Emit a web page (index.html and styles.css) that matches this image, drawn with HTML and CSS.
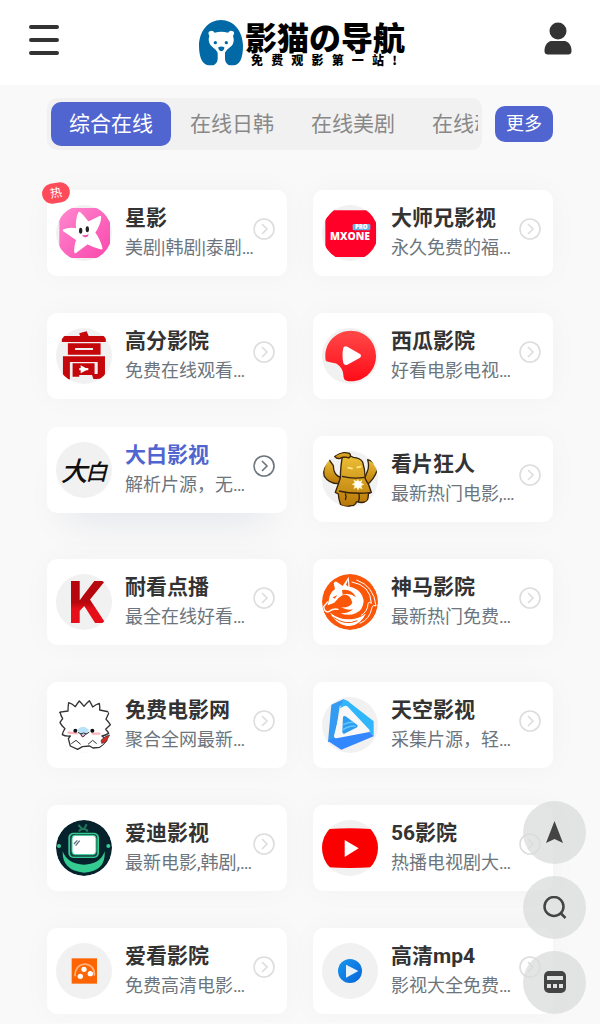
FILE: index.html
```html
<!DOCTYPE html>
<html lang="zh-CN">
<head>
    <meta charset="UTF-8">
    <meta name="viewport" content="width=device-width, initial-scale=1">
    <title>影猫の导航</title>
    <link rel="stylesheet" href="styles.css">
</head>
<body>
    <svg class="symbols" aria-hidden="true">
        <symbol id="arrow" viewBox="0 0 22 22">
            <circle cx="11" cy="11" r="10" fill="none" stroke="currentColor" stroke-width="1.6"/>
            <path d="M9 6l5 5-5 5" fill="none" stroke="currentColor" stroke-width="1.6"/>
        </symbol>
    </svg>

    <header class="header">
        <button class="icon-btn" aria-label="菜单">
            <svg width="32" height="32" viewBox="0 0 32 32"><path d="M3 4h26M3 17h26M3 30h26" stroke="#333" stroke-width="4" stroke-linecap="round"/></svg>
        </button>
        <a class="brand" href="#">
            <svg width="44" height="46" viewBox="0 0 132 138">
                <path d="M66 0C28 0 0 34 0 78c0 38 13 58 30 58h8c13 0 19-12 18-25V90h22v21c-1 13 5 25 18 25h8c17 0 28-20 28-58C132 34 104 0 66 0z" fill="#0069a6"/>
                <path d="M31 48q-7-14 4-15 7-2 12 5 20-5 40 0 5-7 12-5 11 2 3 15 6 17-4 29-8 7-14 12l-7 10q-10 7-20 0l-7-10q-9-6-15-13-9-12-4-28z" fill="#fff"/>
                <circle cx="49" cy="68" r="5" fill="#0069a6"/>
                <circle cx="82" cy="68" r="5" fill="#0069a6"/>
                <path d="M58 82q9-5 18 0 0 10-9 12-9-2-9-12z" fill="#0069a6"/>
            </svg>
            <span class="brand-text">
                <span class="brand-name">影猫の导航</span>
                <span class="brand-slogan"><span>免</span><span>费</span><span>观</span><span>影</span><span>第</span><span>一</span><span>站</span><span>!</span></span>
            </span>
        </a>
        <button class="icon-btn" aria-label="用户">
            <svg width="28" height="34" viewBox="0 0 28 34"><circle cx="14" cy="9" r="8.500" fill="#333"/><path d="M7 19h14c4 1 6.500 5 6.500 9.500 0 3-1 4-4 4h-19c-3 0-4-1-4-4C.5 24 3 20 7 19z" fill="#333"/></svg>
        </button>
    </header>

    <main class="content">
        <div class="tab-bar">
            <nav class="tabs">
                <a class="tab active" href="#">综合在线</a>
                <a class="tab" href="#">在线日韩</a>
                <a class="tab" href="#">在线美剧</a>
                <a class="tab" href="#">在线动漫</a>
            </nav>
            <a class="more" href="#">更多</a>
        </div>

        <div class="grid">
            <a class="card" href="#">
                <span class="badge">热</span>
                <svg class="logo" viewBox="0 0 168 168">
                    <defs><linearGradient id="pink" x2="1" y2="1"><stop stop-color="#ff87cf"/><stop offset="1" stop-color="#fa48ac"/></linearGradient></defs>
                    <path d="M34 9h104l24 26v100l-24 24H34l-24-24V35z" fill="url(#pink)"/>
                    <path d="M70 24Q82 34 96 54L132 36Q132 55 114 83 130 105 136 130 116 126 94 114L58 141Q57 126 64 104L24 76Q42 68 64 74 61 42 70 24z" fill="#fff" stroke="#fff" stroke-width="7" stroke-linejoin="round"/>
                    <ellipse cx="74" cy="77" rx="5" ry="9" fill="#222"/>
                    <ellipse cx="94" cy="73" rx="5" ry="9" fill="#222"/>
                    <path d="M78 90q12 3 20-3-2 11-11 10-7-1-9-7z" fill="#f04cab"/>
                </svg>
                <span class="info"><strong class="title">星影</strong><span class="desc">美剧|韩剧|泰剧…</span></span>
                <svg class="arrow"><use href="#arrow"/></svg>
            </a>
            <a class="card" href="#">
                <svg class="logo" viewBox="0 0 168 168">
                    <path d="M34 16h104l24 26v90l-24 24H34l-24-24V42z" fill="#ff0028"/>
                    <rect x="92" y="57" width="53" height="19" rx="4" fill="#63b5e7"/>
                    <text x="118" y="73" class="logo-latin" font-size="18" fill="#fff" text-anchor="middle">PRO</text>
                    <text x="84" y="105" class="logo-latin" font-size="31" fill="#fff" text-anchor="middle">MXONE</text>
                </svg>
                <span class="info"><strong class="title">大师兄影视</strong><span class="desc">永久免费的福…</span></span>
                <svg class="arrow"><use href="#arrow"/></svg>
            </a>

            <a class="card" href="#">
                <svg class="logo" viewBox="0 0 168 168">
                    <text x="84" y="138" class="logo-cjk" font-size="148" fill="#c5060b" text-anchor="middle">高</text>
                    <path d="M74 112l22 12-22 12z" fill="#fff"/>
                </svg>
                <span class="info"><strong class="title">高分影院</strong><span class="desc">免费在线观看…</span></span>
                <svg class="arrow"><use href="#arrow"/></svg>
            </a>
            <a class="card" href="#">
                <svg class="logo" viewBox="0 0 168 168">
                    <defs><linearGradient id="melon" x2="0" y2="1"><stop stop-color="#ff4949"/><stop offset="1" stop-color="#ff0c17"/></linearGradient></defs>
                    <path d="M87 8c42 0 75 33 75 76s-33 76-75 76q-15 0-20-6c-4-8-2-16-5-24-4-13-15-24-27-25-8-2-20-2-24-8-1-5-1-9-1-13C10 41 44 8 87 8z" fill="url(#melon)"/>
                    <path d="M64 60q2-7 12-4l38 22q6 5 0 11l-38 21q-9 3-12-5-5-24 0-45z" fill="#fff"/>
                </svg>
                <span class="info"><strong class="title">西瓜影院</strong><span class="desc">好看电影电视…</span></span>
                <svg class="arrow"><use href="#arrow"/></svg>
            </a>

            <a class="card current" href="#">
                <svg class="logo" viewBox="0 0 168 168">
                    <text x="14" y="118" class="logo-brush" font-size="80" fill="#111">大</text>
                    <text x="88" y="115" class="logo-brush" font-size="66" fill="#111">白</text>
                </svg>
                <span class="info"><strong class="title">大白影视</strong><span class="desc">解析片源，无…</span></span>
                <svg class="arrow"><use href="#arrow"/></svg>
            </a>
            <a class="card" href="#">
                <svg class="logo" viewBox="0 0 168 168">
                    <defs><linearGradient id="gold" x2="0" y2="1"><stop stop-color="#edbf36"/><stop offset="1" stop-color="#b87808"/></linearGradient></defs>
                    <g fill="url(#gold)" stroke="#35240b" stroke-width="4" stroke-linejoin="round">
                        <path d="M20 24Q0 50 7 76q14 22 42 22l8-18Q34 72 34 44z"/>
                        <path d="M137 26q6 22-2 38l-9 22 6 18q25-18 34-48-6-25-29-30z"/>
                        <path d="M64 19Q80 10 94 19q20 1 28 14 8 26 7 49 14 20 19 42l-9 4q1 15-6 24-14 5-29 0-6 13-16 12-20 6-32-3-7-19-7-32l-9-5q9-24 15-43 1-41 6-62z"/>
                        <path d="M38 16Q57 0 82 7q8 8-2 14-13-6-25 1-10 3-17-6z"/>
                        <path d="M60 76q34 9 67 3M51 120q40 10 94 5M70 147q4-9 0-20M109 152q5-12 2-23" fill="none"/>
                    </g>
                    <path d="M108 83l3 9 10-6-3 10 9 4-9 5 4 10-10-4-4 8-4-9-10 4 4-10-9-4 9-5-4-9 10 4z" fill="#fff4b5"/>
                    <circle cx="108" cy="100" r="10" fill="#fff"/>
                    <path d="M77 50l15 3M104 50l14-4" stroke="#ffe783" stroke-width="5"/>
                </svg>
                <span class="info"><strong class="title">看片狂人</strong><span class="desc">最新热门电影,…</span></span>
                <svg class="arrow"><use href="#arrow"/></svg>
            </a>

            <a class="card" href="#">
                <svg class="logo" viewBox="0 0 168 168">
                    <defs><linearGradient id="ribbon" x2="0" y2="1"><stop offset=".5" stop-color="#b5070d"/><stop offset=".6" stop-color="#e60e18"/></linearGradient></defs>
                    <text x="90" y="146" class="logo-narrow" font-size="178" fill="url(#ribbon)" text-anchor="middle">K</text>
                </svg>
                <span class="info"><strong class="title">耐看点播</strong><span class="desc">最全在线好看…</span></span>
                <svg class="arrow"><use href="#arrow"/></svg>
            </a>
            <a class="card" href="#">
                <svg class="logo" viewBox="0 0 168 168">
                    <circle cx="84" cy="84" r="84" fill="#fc5709"/>
                    <path d="M62 36L80 8l3 30q38 8 42 44-2 28-24 36-22 9-46 0 24 1 38-12-18 4-36-6 26 2 34-14-8-30-30-22-14 8-24 22l-20 8 4-18q2-20 18-30l-4-18q4-8 10-4z" fill="#fff"/>
                    <path d="M72 32l6-14 1 20zM60 48q30-4 42 22-18-14-40-8zM32 70l14-6-8 10z" fill="#fc5709"/>
                    <g fill="none" stroke="#fff" stroke-linecap="round" stroke-linejoin="round">
                        <path d="M17 84L5 98q2 16 13 16 16-12 30-8" stroke-width="4"/>
                        <path d="M90 24q56 10 58 64-7-6-10 0 0 24-20 36" stroke-width="3"/>
                        <path d="M104 18q52 18 58 78-8-6-12 4-6 36-36 48" stroke-width="3"/>
                    </g>
                    <path d="M24 116q34 26 74 18 22-4 34-16-14 34-48 38-38 0-60-40z" fill="#fff"/>
                    <path d="M34 130q36 26 72 10" fill="none" stroke="#fc5709" stroke-width="3"/>
                </svg>
                <span class="info"><strong class="title">神马影院</strong><span class="desc">最新热门免费…</span></span>
                <svg class="arrow"><use href="#arrow"/></svg>
            </a>

            <a class="card" href="#">
                <svg class="logo" viewBox="0 0 168 168">
                    <circle cx="84" cy="84" r="84" fill="#fff"/>
                    <path d="M7 46L36 42Q36 28 38 17q12 4 20 12 6-10 12-17 8 8 14 16 8-10 16-17 6 10 10 19 10-8 20-11 2 10 1 20l29 6q-6 12-10 22 8 8 13 16-8 8-14 14 6 6 9 12-10 6-20 8 10 8 17 14-10 12-24 20l-20 2-10-6-22 2-14 8-22-10-6-22 6-8q-14 2-24-4 2-10 8-18-10-8-15-18 4-8 8-12-6-10-8-20z" fill="#fff" stroke="#333" stroke-width="4" stroke-linejoin="round"/>
                    <path d="M64 98q16-18 35 0l-8 15H74z" fill="#b9e1fa"/>
                    <path d="M38 107l24 2M110 110h20" stroke="#ffb3bb" stroke-width="7" stroke-linecap="round"/>
                    <circle cx="58" cy="101" r="6" fill="#111"/><circle cx="109" cy="101" r="6" fill="#111"/>
                    <path d="M74 113q4 15 15 0z" fill="#ff9bc4"/>
                    <path d="M66 106q8 9 17 2 9 7 17-3M74 108q4 23 17 0" fill="none" stroke="#333" stroke-width="3"/>
                    <path d="M46 140l14-10 14 12M96 142l14-12 12 10" fill="none" stroke="#333" stroke-width="3"/>
                    <path d="M135 130l14-12 12-4-12 23-12 2z" fill="#d22c28" stroke="#333" stroke-width="2"/>
                </svg>
                <span class="info"><strong class="title">免费电影网</strong><span class="desc">聚合全网最新…</span></span>
                <svg class="arrow"><use href="#arrow"/></svg>
            </a>
            <a class="card" href="#">
                <svg class="logo" viewBox="0 0 168 168">
                    <path d="M28 23L64 7 80 14 53 28 38 128 18 135z" fill="#359af2"/>
                    <path d="M64 7l12 4 79 62v45L136 98 72 26 54 34z" fill="#2fb6fb"/>
                    <path d="M18 132l20-10 98-24 19 20-97 40z" fill="#3387ff"/>
                    <path d="M66 28q6-4 12 2l64 68q4 6-4 8L44 124q-8 0-8-8l20-80q4-6 10-8z" fill="#f8f8f8"/>
                    <path d="M63 59q4-4 10 0l33 25q3 6-5 9l-34 17q-6 1-6-6z" fill="#2e9cef"/>
                    <path d="M64 83q22-10 32-6M63 98q22-14 38-10" stroke="#65c7ff" stroke-width="4" fill="none"/>
                </svg>
                <span class="info"><strong class="title">天空影视</strong><span class="desc">采集片源，轻…</span></span>
                <svg class="arrow"><use href="#arrow"/></svg>
            </a>

            <a class="card" href="#">
                <svg class="logo" viewBox="0 0 168 168">
                    <circle cx="84" cy="84" r="84" fill="#06232d"/>
                    <path d="M20 94q14 38 64 40 50-2 62-40 4 60-62 64-66-6-64-64z" fill="#35cc91"/>
                    <path d="M70 35q0-8 12-8t12 8M79 27L67 15M84 27l8-14" fill="none" stroke="#24755d" stroke-width="6"/>
                    <rect x="37" y="38" width="92" height="76" rx="15" fill="#35cc91"/>
                    <rect x="42" y="42" width="82" height="68" rx="12" fill="#154c49"/>
                    <rect x="48" y="46" width="72" height="58" rx="10" fill="#fff" stroke="#35cc91" stroke-width="3"/>
                    <path d="M54 72l10-11M59 77l12-15" stroke="#5d7183" stroke-width="4"/>
                    <circle cx="9" cy="78" r="6" fill="#35cc91"/><circle cx="157" cy="78" r="6" fill="#35cc91"/>
                </svg>
                <span class="info"><strong class="title">爱迪影视</strong><span class="desc">最新电影,韩剧,…</span></span>
                <svg class="arrow"><use href="#arrow"/></svg>
            </a>
            <a class="card" href="#">
                <svg class="logo" viewBox="0 0 168 168">
                    <path d="M22 27Q84 23 146 27 168 32 168 53v60q-1 22-18 29-66 4-132 0Q0 134 0 113V53q3-22 22-26z" fill="#fb0000"/>
                    <path d="M68 60l42 25-42 26z" fill="#fff"/>
                </svg>
                <span class="info"><strong class="title">56影院</strong><span class="desc">热播电视剧大…</span></span>
                <svg class="arrow"><use href="#arrow"/></svg>
            </a>

            <a class="card" href="#">
                <svg class="logo" viewBox="0 0 168 168">
                    <rect x="47" y="46" width="76" height="76" fill="#fd6504"/>
                    <path d="M57 100q0-34 30-37 30 4 28 35" fill="none" stroke="#ffb37b" stroke-width="5"/>
                    <g fill="#fff"><circle cx="84" cy="79" r="8"/><circle cx="73" cy="100" r="8"/><circle cx="103" cy="92" r="8"/></g>
                </svg>
                <span class="info"><strong class="title">爱看影院</strong><span class="desc">免费高清电影…</span></span>
                <svg class="arrow"><use href="#arrow"/></svg>
            </a>
            <a class="card" href="#">
                <svg class="logo" viewBox="0 0 168 168">
                    <defs><linearGradient id="blue" x2="1" y2="1"><stop stop-color="#1897ed"/><stop offset="1" stop-color="#0865d8"/></linearGradient></defs>
                    <circle cx="84" cy="84" r="36" fill="url(#blue)"/>
                    <path d="M72 65l37 19-37 20z" fill="#e8f2fb"/>
                </svg>
                <span class="info"><strong class="title">高清mp4</strong><span class="desc">影视大全免费…</span></span>
                <svg class="arrow"><use href="#arrow"/></svg>
            </a>
        </div>
    </main>

    <div class="float-tools">
        <button class="float-btn" aria-label="回到顶部">
            <svg width="24" height="24" viewBox="0 0 24 24"><path d="M11.500 0L20 22l-8.500-4L3 22z" fill="#444"/></svg>
        </button>
        <button class="float-btn" aria-label="搜索">
            <svg width="24" height="24" viewBox="0 0 24 24" fill="none" stroke="#444" stroke-width="2.500"><circle cx="11" cy="10.500" r="9.500"/><path d="M17.500 17l5 5"/></svg>
        </button>
        <button class="float-btn" aria-label="小工具">
            <svg width="24" height="24" viewBox="0 0 24 24"><rect x="1" y="0" width="22" height="22" rx="5" fill="#444"/><path d="M4 5h16v4H4zM4 13h4v4H4zM10 13h4v4h-4zM16 13h4v4h-4z" fill="#e0e1e1"/></svg>
        </button>
    </div>
</body>
</html>
```
FILE: styles.css
```css
* {
    box-sizing: border-box;
}
body {
    margin: 0;
    background-color: #f9f9f9;
    font-family: Roboto, "Noto Sans CJK SC", sans-serif;
    color: #333;
    overflow-x: hidden;
}
a {
    color: inherit;
    text-decoration: none;
}
button {
    padding: 0;
    border: none;
    background: none;
    cursor: pointer;
}
.symbols {
    display: none;
}

/* header */
.header {
    display: flex;
    align-items: center;
    justify-content: space-between;
    height: 85px;
    padding: 0 28px;
    background-color: #fff;
}
.icon-btn {
    display: flex;
    padding-bottom: 8px;
}
.brand {
    display: flex;
    align-items: center;
    gap: 2px;
    color: #000;
}
.brand-text {
    display: flex;
    flex-direction: column;
    font-family: "Noto Sans CJK SC", sans-serif;
    font-weight: 900;
}
.brand-name {
    font-size: 32px;
    line-height: 34px;
}
.brand-slogan {
    display: flex;
    justify-content: space-between;
    padding: 0 8px 0 6px;
    font-size: 12px;
    line-height: 14px;
}

/* tabs */
.content {
    padding: 13px 47px 8px;
}
.tab-bar {
    display: flex;
    align-items: center;
    gap: 13px;
    margin-bottom: 40px;
}
.tabs {
    flex: 1;
    min-width: 0;
    display: flex;
    gap: 1px;
    border: 4px solid #f1f1f1;
    border-radius: 10px;
    background-color: #f1f1f1;
    overflow: hidden;
}
.tab {
    flex: none;
    padding: 0 18px;
    border-radius: 10px;
    font-size: 21px;
    line-height: 44px;
    color: #888;
}
.tab.active {
    background-color: #5065cf;
    color: #fff;
}
.more {
    padding: 0 11px;
    border-radius: 10px;
    background-color: #5065cf;
    font-size: 18px;
    line-height: 36px;
    color: #fff;
}

/* site cards */
.grid {
    display: grid;
    grid-template-columns: 1fr 1fr;
    gap: 37px 26px;
}
.card {
    position: relative;
    display: flex;
    align-items: center;
    gap: 13px;
    min-width: 0;
    padding: 13px 12px 13px 9px;
    border-radius: 10px;
    background-color: #fff;
    box-shadow: 0 0 30px rgba(0, 0, 0, 0.03);
}
.logo {
    flex: none;
    width: 56px;
    height: 56px;
    border-radius: 50%;
    background-color: #f1f1f1;
    overflow: hidden;
}
.logo-latin {
    font-family: "Open Sans", sans-serif;
    font-weight: 800;
}
.logo-cjk {
    font-family: "Noto Sans CJK SC", sans-serif;
    font-weight: 900;
}
.logo-brush {
    font-family: "Noto Sans CJK SC", sans-serif;
    font-weight: 500;
    font-style: italic;
}
.logo-narrow {
    font-family: Roboto, sans-serif;
    font-weight: 700;
}
.info {
    flex: 1;
    min-width: 0;
    display: flex;
    flex-direction: column;
    line-height: 30px;
    white-space: nowrap;
}
.title {
    font-size: 21px;
}
.desc {
    font-size: 18px;
    color: #6c757d;
}
.arrow {
    flex: none;
    width: 22px;
    height: 22px;
    margin: 0 0 8px -13px;
    color: #ddd;
}
.card:hover,
.card.current {
    transform: translateY(-9px);
    box-shadow: 0 26px 40px -20px rgba(0, 36, 100, 0.1);
}
.card:hover .title,
.card.current .title {
    color: #5065cf;
}
.card:hover .arrow,
.card.current .arrow {
    color: #6c757d;
}
.badge {
    position: absolute;
    top: -7px;
    left: -5px;
    padding: 0 8px;
    border-radius: 10px;
    background-color: #ff4a59;
    font-size: 12px;
    line-height: 20px;
    color: #fff;
    transform: rotate(-10deg);
}

/* floating tools */
.float-tools {
    position: fixed;
    right: 14px;
    bottom: 10px;
    display: flex;
    flex-direction: column;
    gap: 12px;
}
.float-btn {
    display: flex;
    align-items: center;
    justify-content: center;
    width: 63px;
    height: 63px;
    border-radius: 50%;
    background-color: rgba(218, 220, 219, 0.75);
}
```
